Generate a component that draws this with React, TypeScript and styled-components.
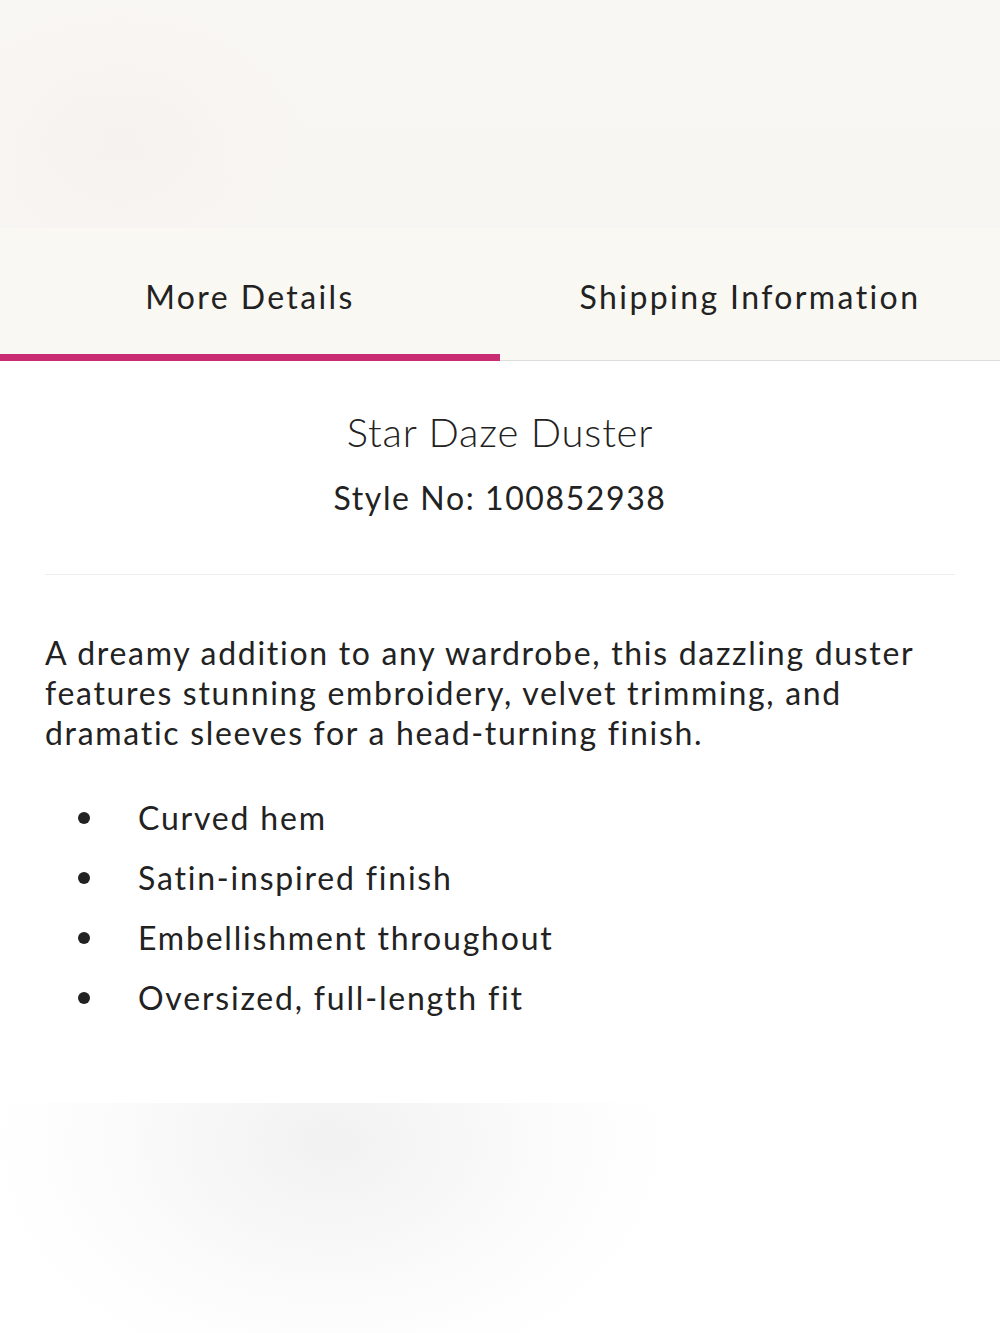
import React, { useState } from 'react';
import styled, { createGlobalStyle } from 'styled-components';

const GlobalStyle = createGlobalStyle`
  html, body {
    margin: 0;
    padding: 0;
    background: #ffffff;
  }
  body {
    font-family: Lato, "Open Sans", sans-serif;
    color: #222222;
  }
`;

const Page = styled.div`
  width: 1000px;
  min-height: 1333px;
  display: flex;
  flex-direction: column;
  background: #ffffff;
  overflow: hidden;
`;

// faded product photo strip at the top
const Hero = styled.div`
  height: 228px;
  background:
    radial-gradient(ellipse 260px 200px at 120px 140px, rgba(240, 234, 230, 0.35), transparent 70%),
    linear-gradient(180deg, #f9f7f4 0%, #f8f6f3 100%);
`;

const TabBar = styled.div`
  display: flex;
  height: 132px;
  background: #faf8f2;
  border-bottom: 1px solid #dedcd8;
`;

type TabProps = {
  $active: boolean;
};

const Tab = styled.button<TabProps>`
  flex: 1;
  display: flex;
  align-items: center;
  justify-content: center;
  padding: 10px 0 0;
  margin: 0 0 -1px;
  border: none;
  border-bottom: 7px solid ${(props) => (props.$active ? '#c92c71' : 'transparent')};
  background: transparent;
  font-family: Lato, sans-serif;
  font-size: 32px;
  letter-spacing: 2.4px;
  color: #222222;
  cursor: pointer;
`;

const Content = styled.div`
  padding: 0 45px;
  display: flex;
  flex-direction: column;
`;

const Header = styled.div`
  display: flex;
  flex-direction: column;
  align-items: center;
  padding: 46px 0 56px;
  border-bottom: 1px solid #efedea;
`;

const Title = styled.h1`
  margin: 0;
  font-family: Lato, sans-serif;
  font-weight: 300;
  font-size: 40px;
  line-height: 50px;
  letter-spacing: 0.8px;
  color: #222222;
`;

const StyleNo = styled.div`
  margin-top: 21px;
  font-size: 32px;
  line-height: 40px;
  letter-spacing: 1.6px;
  color: #222222;
`;

const Description = styled.p`
  margin: 58px 0 0;
  font-size: 32px;
  line-height: 40px;
  letter-spacing: 1.7px;
  color: #222222;
`;

const Features = styled.ul`
  list-style: none;
  margin: 45px 0 0;
  padding: 0 0 0 30px;
  display: flex;
  flex-direction: column;
  gap: 20px;
`;

const Feature = styled.li`
  display: flex;
  align-items: center;
  font-size: 32px;
  line-height: 40px;
  letter-spacing: 1.8px;
  color: #222222;

  &::before {
    content: '';
    width: 12px;
    height: 12px;
    border-radius: 50%;
    background: #222222;
    margin: 0 48px 0 3px;
    flex-shrink: 0;
  }
`;

const Footer = styled.div`
  flex: 1;
  margin-top: 85px;
  background: radial-gradient(ellipse 340px 240px at 330px 40px, rgba(240, 240, 240, 0.9), rgba(250, 250, 250, 0.6) 70%, #ffffff 100%);
`;

const features = [
  'Curved hem',
  'Satin-inspired finish',
  'Embellishment throughout',
  'Oversized, full-length fit',
];

const App = () => {
  const [activeTab, setActiveTab] = useState('details');

  return (
    <Page>
      <GlobalStyle />
      <Hero />
      <TabBar>
        <Tab $active={activeTab === 'details'} onClick={() => setActiveTab('details')}>
          More Details
        </Tab>
        <Tab $active={activeTab === 'shipping'} onClick={() => setActiveTab('shipping')}>
          Shipping Information
        </Tab>
      </TabBar>
      <Content>
        <Header>
          <Title>Star Daze Duster</Title>
          <StyleNo>Style No: 100852938</StyleNo>
        </Header>
        <Description>
          A dreamy addition to any wardrobe, this dazzling duster features stunning embroidery,
          velvet trimming, and dramatic sleeves for a head-turning finish.
        </Description>
        <Features>
          {features.map((item) => (
            <Feature key={item}>{item}</Feature>
          ))}
        </Features>
      </Content>
      <Footer />
    </Page>
  );
};

export default App;
